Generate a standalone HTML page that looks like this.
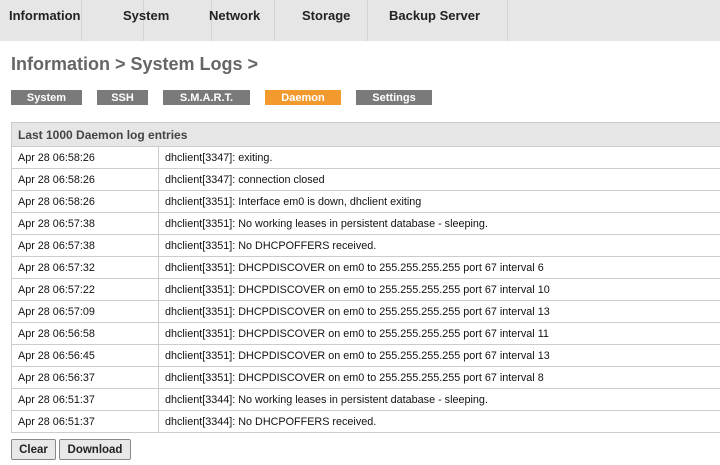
<!DOCTYPE html><html><head><style>
body{margin:0;width:720px;height:465px;overflow:hidden;background:#fff;font-family:"Liberation Sans",sans-serif;}
.n{position:absolute;top:8px;font-weight:bold;font-size:13px;color:#222}
.s{position:absolute;top:0;width:1px;height:41px;background:#d4d4d4}
h1{position:absolute;left:11px;top:54px;margin:0;font-size:18px;color:#666;font-weight:bold;}
.tab{position:absolute;top:90px;height:15px;background:#7a7a7a;color:#fff;font-weight:bold;font-size:11px;line-height:17px;text-align:center;}
table{position:absolute;left:11px;top:122px;width:720px;border-collapse:collapse;font-size:10.8px;color:#111;}
td{border:1px solid #ccc;height:21px;padding:0 0 0 6px;}
th{background:#e6e6e6;text-align:left;font-size:12px;color:#444;height:23px;padding:0 0 0 6px;border:1px solid #ccc;}
.btn{position:absolute;top:439px;height:19px;border:1px solid #888;border-radius:2px;background:#e8e8e8;font-weight:bold;font-size:11.5px;line-height:21px;text-align:center;color:#222;}
</style></head><body>
<div style="position:absolute;left:0;top:0;width:720px;height:41px;background:#e6e6e6"></div>
<div class="s" style="left:81px"></div>
<div class="s" style="left:143px"></div>
<div class="s" style="left:211px"></div>
<div class="s" style="left:274px"></div>
<div class="s" style="left:367px"></div>
<div class="s" style="left:507px"></div>
<div class="n" style="left:9px">Information</div>
<div class="n" style="left:123px">System</div>
<div class="n" style="left:209px">Network</div>
<div class="n" style="left:302px">Storage</div>
<div class="n" style="left:389px">Backup Server</div>
<h1>Information &gt; System Logs &gt;</h1>
<div class="tab" style="left:11px;width:71px">System</div>
<div class="tab" style="left:97px;width:51px">SSH</div>
<div class="tab" style="left:163px;width:87px">S.M.A.R.T.</div>
<div class="tab" style="left:265px;width:76px;background:#f39a2e">Daemon</div>
<div class="tab" style="left:356px;width:76px">Settings</div>
<table>
<tr><th colspan="2">Last 1000 Daemon log entries</th></tr>
<tr><td style="width:140px">Apr 28 06:58:26</td><td>dhclient[3347]: exiting.</td></tr>
<tr><td>Apr 28 06:58:26</td><td>dhclient[3347]: connection closed</td></tr>
<tr><td>Apr 28 06:58:26</td><td>dhclient[3351]: Interface em0 is down, dhclient exiting</td></tr>
<tr><td>Apr 28 06:57:38</td><td>dhclient[3351]: No working leases in persistent database - sleeping.</td></tr>
<tr><td>Apr 28 06:57:38</td><td>dhclient[3351]: No DHCPOFFERS received.</td></tr>
<tr><td>Apr 28 06:57:32</td><td>dhclient[3351]: DHCPDISCOVER on em0 to 255.255.255.255 port 67 interval 6</td></tr>
<tr><td>Apr 28 06:57:22</td><td>dhclient[3351]: DHCPDISCOVER on em0 to 255.255.255.255 port 67 interval 10</td></tr>
<tr><td>Apr 28 06:57:09</td><td>dhclient[3351]: DHCPDISCOVER on em0 to 255.255.255.255 port 67 interval 13</td></tr>
<tr><td>Apr 28 06:56:58</td><td>dhclient[3351]: DHCPDISCOVER on em0 to 255.255.255.255 port 67 interval 11</td></tr>
<tr><td>Apr 28 06:56:45</td><td>dhclient[3351]: DHCPDISCOVER on em0 to 255.255.255.255 port 67 interval 13</td></tr>
<tr><td>Apr 28 06:56:37</td><td>dhclient[3351]: DHCPDISCOVER on em0 to 255.255.255.255 port 67 interval 8</td></tr>
<tr><td>Apr 28 06:51:37</td><td>dhclient[3344]: No working leases in persistent database - sleeping.</td></tr>
<tr><td>Apr 28 06:51:37</td><td>dhclient[3344]: No DHCPOFFERS received.</td></tr>
</table>
<div class="btn" style="left:11px;width:43px">Clear</div>
<div class="btn" style="left:59px;width:70px">Download</div>
</body></html>
